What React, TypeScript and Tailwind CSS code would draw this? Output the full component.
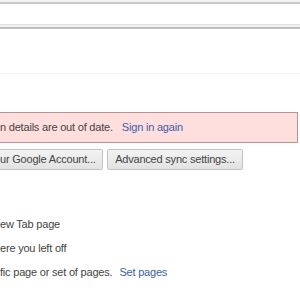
export default function App() {
  return (
    <div
      className="w-[300px] h-[300px] overflow-hidden bg-white text-[#444] text-[11px] tracking-[-0.2px] whitespace-nowrap"
      style={{ fontFamily: '"Liberation Sans", Arial, sans-serif' }}
    >
      {/* top frame */}
      <div className="h-[2px] bg-[#f4f4f4]" />
      <div className="h-[2px] bg-[#c9c9c9]" />
      <div className="h-[20px] bg-white" />
      <div className="h-px bg-[#e2e2e2]" />
      <div className="h-[2px] bg-[#f0f0f0]" />
      <div className="h-[2px] bg-[#bdbdbd]" />
      <div className="h-[44px] bg-white" />
      <div className="h-px bg-[#f2f2f2]" />

      {/* sync error */}
      <div className="mt-[38px] mr-[2px] h-[31px] flex items-center bg-[#ffdede] border-y border-r border-[#b49494]">
        <span>n details are out of date.</span>
        <a className="ml-[9px] text-[#3b5ea8]">Sign in again</a>
      </div>

      <div className="mt-[6px] flex gap-[4px]">
        <button className="h-[21px] w-[103px] text-left rounded-r-[2px] border border-l-0 border-[#c2c2c2] bg-gradient-to-b from-[#f3f3f3] to-[#e2e2e2] text-[#444]">
          ur Google Account...
        </button>
        <button className="h-[21px] w-[136px] rounded-[2px] border border-[#c2c2c2] bg-gradient-to-b from-[#f3f3f3] to-[#e2e2e2] text-[#444]">
          Advanced sync settings...
        </button>
      </div>

      {/* on startup */}
      <div className="mt-[46px] flex flex-col gap-[7px]">
        <div className="h-[17px] flex items-center">ew Tab page</div>
        <div className="h-[17px] flex items-center">ere you left off</div>
        <div className="h-[17px] flex items-center">
          fic page or set of pages.
          <a className="ml-[7px] text-[#3b5ea8]">Set pages</a>
        </div>
      </div>
    </div>
  );
}
